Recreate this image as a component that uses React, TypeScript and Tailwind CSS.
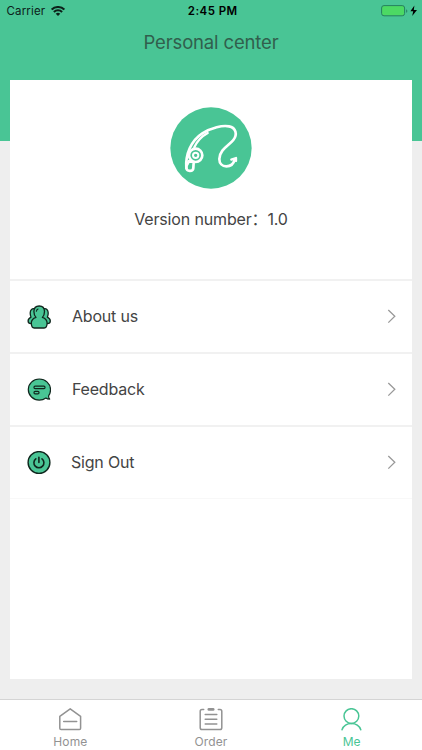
import type { ReactNode } from "react";

function StatusBar() {
  return (
    <div className="grid h-[22px] grid-cols-3 items-center pl-[6.5px] pr-[4px] text-[11.5px] leading-none text-[#0c2119]">
      <div className="flex items-center gap-[6px]">
        <span className="pt-px tracking-[0.15px]">Carrier</span>
        <svg width="14" height="11" viewBox="0 0 14 11" fill="none" stroke="currentColor" strokeWidth="2.1">
          <path d="M.7 3.6a9 9 0 0 1 12.6 0M2.9 6a5.8 5.8 0 0 1 8.2 0" />
          <path d="M7 10.1 4.7 7.8a3.3 3.3 0 0 1 4.6 0z" fill="currentColor" stroke="none" />
        </svg>
      </div>
      <span className="pt-[2px] pl-px text-center text-[11.5px] font-semibold tracking-[0.45px] text-black">2:45 PM</span>
      <div className="flex items-center justify-end">
        <svg width="37" height="12" viewBox="0 0 37 12">
          <rect x=".6" y=".6" width="23" height="10.2" rx="2.4" fill="#4cd964" stroke="#258060" />
          <path d="M25.2 4.2c1.5.5 1.5 3.1 0 3.6z" fill="#258060" />
          <path d="M33.4.4 29.4 6.2h2.8l-1 4.8 4.8-5.9h-3.2z" fill="#000" />
        </svg>
      </div>
    </div>
  );
}

function Logo() {
  return (
    <svg width="82" height="82" viewBox="30 29 246 246" fill="none" stroke="#fff" strokeLinecap="round" strokeLinejoin="round">
      <circle cx="153" cy="152" r="122" fill="#49c595" stroke="none" />
      <path d="M79 212C76 171 93 130 127 108c27-17 61-25 80-21 21 4 26 24 13 41-12 15-42 29-42 57 0 14 9 22 21 22 13 0 22-8 25-21" strokeWidth="8" />
      <path d="M214 187l14-5v9" strokeWidth="7" />
      <path d="M103 150c8-18 20-32 40-43" strokeWidth="7" />
      <path d="M79 206v6c1 12 21 11 21 0l1-17-14-4z" strokeWidth="8" />
      <circle cx="107" cy="174" r="20" fill="#49c595" strokeWidth="8" />
      <circle cx="107" cy="174" r="8" strokeWidth="6" />
    </svg>
  );
}

function PeopleIcon() {
  return (
    <svg width="24" height="24" viewBox="0 0 24 24" fill="#49c595" stroke="#10261d" strokeWidth="1.3" strokeLinejoin="round" strokeLinecap="round">
      <path d="M8 3.8C5 3 3.2 4.8 3.2 8c0 1.700.3 3 .8 4.200-1.800.9-2.900 2-2.900 3.800 0 1.700 1.200 2.600 3 2.600h16.200c1.800 0 3-.9 3-2.600 0-1.800-1.100-2.900-2.900-3.800.5-1.200.8-2.500.8-4.200 0-3.200-1.800-5-4.800-4.200z" />
      <path d="M12.200 1C8.900 1 6.900 3.300 6.900 6.600c0 2.500.8 4.500 2.100 5.800-2.900 1-4.700 2.600-4.700 5.700 0 2.900 1 4.900 3 4.900h9.800c2 0 3-2 3-4.900 0-3.100-1.800-4.700-4.700-5.700 1.300-1.300 2.100-3.300 2.100-5.800C17.500 3.300 15.500 1 12.200 1z" />
      <path d="M9.400 6.300c.1-1.200.7-1.900 1.600-2.300" fill="none" strokeWidth="1.1" />
    </svg>
  );
}

function FeedbackIcon() {
  return (
    <svg width="24" height="24" viewBox="0 0 24 24" fill="#49c595" stroke="#10261d" strokeWidth="1.2" strokeLinejoin="round">
      <path d="M12.3 1C6.2 1 1.3 5.7 1.3 11.5s4.9 10.6 11 10.6c2.5 0 4.8-.8 6.6-2.1 1 .9 2.5 1.1 3.8 1.1-.9-1-1.2-2.2-1-3.4a10.5 10.5 0 0 0 1.800-6.200C23.500 5.700 18.400 1 12.300 1z" />
      <rect x="7" y="8.2" width="11" height="2.4" rx="1.1" />
      <rect x="7" y="13.4" width="5" height="2.4" rx="1.1" />
    </svg>
  );
}

function PowerIcon() {
  return (
    <svg width="24" height="24" viewBox="0 0 24 24" fill="none" stroke="#10261d" strokeLinecap="round">
      <circle cx="12" cy="11.5" r="10.9" fill="#49c595" strokeWidth="1.4" />
      <path d="M8.8 7.8a5 5 0 1 0 6.2 0M11.900 6.300v5.200" strokeWidth="1.6" />
    </svg>
  );
}

function Row({ icon, label }: { icon: ReactNode; label: ReactNode }) {
  return (
    <div className="flex h-[73px] items-center border-t-2 border-[#f1f1f1] pl-[17px] pr-[15.5px] text-[16px] tracking-[-0.2px]">
      {icon}
      {label}
      <svg className="ml-auto" width="10" height="15" viewBox="0 0 10 15" fill="none" stroke="#999" strokeWidth="1.3">
        <path d="M1.3 1 7.8 7.3l-6.5 6.3" />
      </svg>
    </div>
  );
}

function Tab({ icon, label, active }: { icon: ReactNode; label: string; active?: boolean }) {
  return (
    <div className={active ? "flex flex-col items-center text-[#49c595]" : "flex flex-col items-center text-[#929292]"}>
      {icon}
      <span className="mt-[2px] text-[12px] leading-[16px] tracking-[0.1px]">{label}</span>
    </div>
  );
}

export default function App() {
  return (
    <div className="flex h-[750px] w-[422px] flex-col overflow-hidden bg-[#eee] font-['Inter','Noto_Sans_CJK_SC',sans-serif] text-[#444]">
      <header className="h-[141px] shrink-0 bg-[#49c595]">
        <StatusBar />
        <h1 className="mt-[6px] text-center text-[18.5px] leading-[28px] font-normal tracking-[-0.15px] text-[#315f4d]">Personal center</h1>
      </header>

      <main className="mx-[10px] -mt-[61px] h-[599px] shrink-0 bg-white">
        <section className="flex h-[199px] flex-col items-center pt-[27px]">
          <Logo />
          <p className="mt-[18px] text-[16px] leading-[24px] tracking-[-0.15px] whitespace-nowrap">Version number：1.0</p>
        </section>
        <Row icon={<PeopleIcon />} label={<span className="mb-[2px] ml-[21px]">About us</span>} />
        <Row icon={<FeedbackIcon />} label={<span className="mb-[2px] ml-[21px]">Feedback</span>} />
        <Row icon={<PowerIcon />} label={<span className="mb-[2px] ml-[20px]">Sign Out</span>} />
        <div className="border-t border-[#f8f8f8]" />
      </main>

      <nav className="mt-auto grid h-[51px] shrink-0 grid-cols-3 border-t border-[#d4d4d4] bg-white pt-[8px]">
        <Tab
          label="Home"
          icon={
            <svg width="24" height="24" viewBox="0 0 24 24" fill="none" stroke="currentColor" strokeWidth="1.5" strokeLinejoin="round" strokeLinecap="round">
              <path d="M1.8 8.3 12.2.8l10.4 7.5v12a1.3 1.3 0 0 1-1.3 1.3H3.1a1.3 1.3 0 0 1-1.3-1.3zM5.7 13.5h13" />
            </svg>
          }
        />
        <Tab
          label="Order"
          icon={
            <svg width="24" height="24" viewBox="0 0 24 24" fill="none" stroke="currentColor" strokeWidth="1.5" strokeLinecap="round">
              <path d="M4.7 1.6H3a1.8 1.8 0 0 0-1.8 1.8v16.4A1.8 1.8 0 0 0 3 21.6h18a1.8 1.8 0 0 0 1.8-1.8V3.4A1.8 1.8 0 0 0 21 1.6h-1.7M6.2 6.5h11.6M6.2 11.2h11.6M6.2 15.9h11.6" />
              <path d="M9.8 1.4h4.4" strokeWidth="2.6" />
            </svg>
          }
        />
        <Tab
          active
          label="Me"
          icon={
            <svg width="24" height="24" viewBox="0 0 24 24" fill="none" stroke="currentColor" strokeWidth="1.5" strokeLinecap="round">
              <circle cx="11.4" cy="8.1" r="7.4" />
              <path d="M2 21.7c1.4-3.7 5-6.2 9.4-6.2s8 2.5 9.4 6.2" />
            </svg>
          }
        />
      </nav>
    </div>
  );
}
